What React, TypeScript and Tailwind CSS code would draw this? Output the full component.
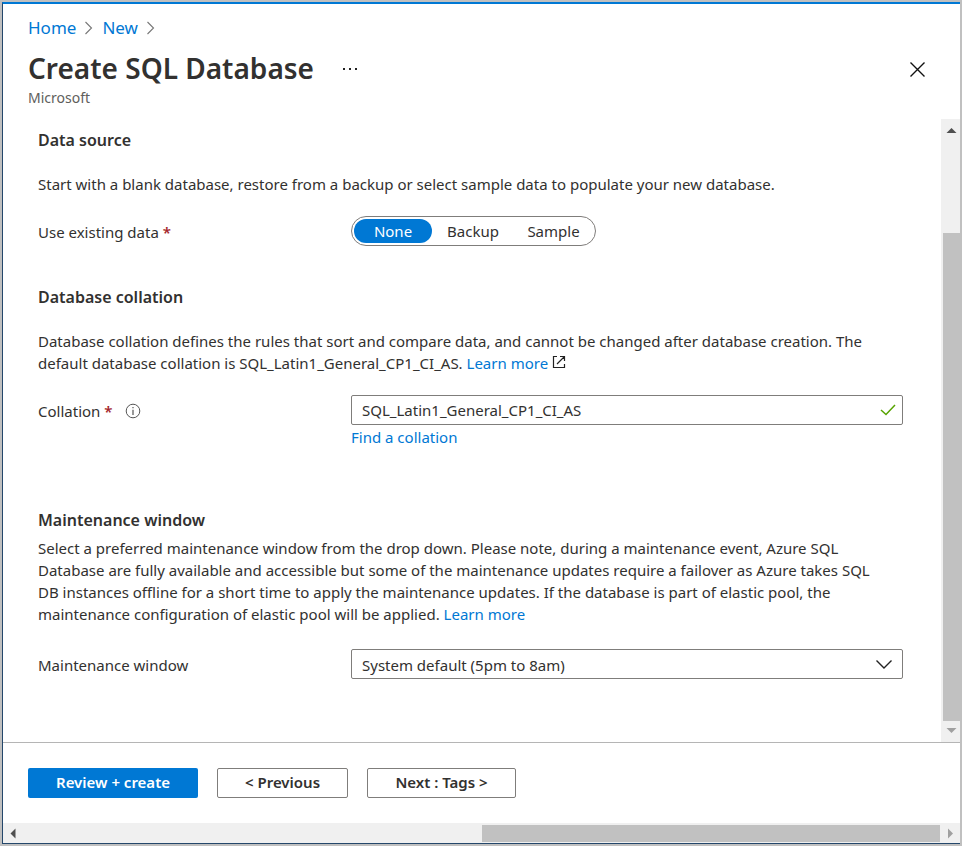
import type { ReactNode } from "react";

const link = "text-[#0078d4] hover:underline";

function Crumb({ children }: { children: ReactNode }) {
  return (
    <li className="flex items-center">
      <a href="#" className={link}>
        {children}
      </a>
      <svg className="mx-[7px] h-4 w-3" viewBox="0 0 12 16" fill="none" stroke="#777" strokeWidth="1.1" aria-hidden="true">
        <path d="M2.5 2 8.5 8 2.5 14" />
      </svg>
    </li>
  );
}

function Heading({ children }: { children: ReactNode }) {
  return <h2 className="text-base leading-[22px] font-semibold">{children}</h2>;
}

function Required() {
  return (
    <span className="ml-1 font-semibold text-[#a4262c]" aria-hidden="true">
      *
    </span>
  );
}

function Choice({ label, width, checked }: { label: string; width: string; checked?: boolean }) {
  return (
    <label
      className={`${width} flex h-6 cursor-pointer items-center justify-center rounded-full has-checked:bg-[#0078d4] has-checked:text-white`}
    >
      <input type="radio" name="existing-data" defaultChecked={checked} className="sr-only" />
      {label}
    </label>
  );
}

function Arrow({ d, fill }: { d: string; fill: string }) {
  return (
    <svg className="size-5 shrink-0" viewBox="0 0 20 20" fill={fill} aria-hidden="true">
      <path d={d} />
    </svg>
  );
}

export default function App() {
  return (
    <div className="flex min-h-screen flex-col border-2 border-[#c0c0c0] font-['Noto_Sans','Open_Sans',sans-serif] text-[15px] leading-[22px] text-[#323130]">
      <div className="flex flex-1 flex-col border-t-2 border-b border-l border-t-[#0078d4] border-b-[#24476b] border-l-[#24476b] bg-white">
        <header className="flex items-start justify-between pt-3 pr-7 pb-[11px] pl-[25px]">
          <div>
            <nav aria-label="Breadcrumb">
              <ol className="flex text-[17px] leading-6">
                <Crumb>Home</Crumb>
                <Crumb>New</Crumb>
              </ol>
            </nav>
            <div className="mt-2 flex items-center gap-6">
              <h1 className="text-[28px] leading-10 font-semibold">Create SQL Database</h1>
              <button type="button" aria-label="More" className="p-1">
                <svg className="h-4 w-4" viewBox="0 0 16 16" fill="#222" aria-hidden="true">
                  <path d="M1 8h2v2H1zM7 8h2v2H7zM13 8h2v2h-2z" />
                </svg>
              </button>
            </div>
            <p className="text-sm leading-5 text-[#605e5c]">Microsoft</p>
          </div>
          <button type="button" aria-label="Close" className="mt-10 p-1">
            <svg className="size-5" viewBox="0 0 20 20" fill="none" stroke="#111" strokeWidth="1.4" aria-hidden="true">
              <path d="m2.500 2.500 14 14M16.500 2.500l-14 14" />
            </svg>
          </button>
        </header>

        <div className="flex flex-1">
          <main className="flex-1 pt-[10px] pr-[38px] pb-10 pl-[35px]">
            <section>
              <Heading>Data source</Heading>
              <p className="mt-[22px]">
                Start with a blank database, restore from a backup or select sample data to populate your new database.
              </p>
              <div className="mt-[21px] flex items-center" role="radiogroup" aria-labelledby="existing">
                <span id="existing" className="w-[313px] shrink-0 pt-[2px]">
                  Use existing data
                  <Required />
                </span>
                <div className="flex h-[30px] items-center rounded-full border border-[#7f7d7b] px-[2px]">
                  <Choice label="None" width="w-[78px]" checked />
                  <Choice label="Backup" width="w-[82px]" />
                  <Choice label="Sample" width="w-[79px]" />
                </div>
              </div>
            </section>

            <section className="mt-10">
              <Heading>Database collation</Heading>
              <p className="mt-[22px]">
                Database collation defines the rules that sort and compare data, and cannot be changed after database creation. The
                <br />
                default database collation is SQL_Latin1_General_CP1_CI_AS.{" "}
                <a href="#" className={link}>
                  Learn more
                  <svg
                    className="ml-1 inline size-[14px] align-baseline"
                    viewBox="0 0 14 14"
                    fill="none"
                    stroke="#222"
                    strokeWidth="1.2"
                    aria-hidden="true"
                  >
                    <path d="M5 1.5H1.5v11h11V9M8 1.5h4.500v4.500M12.500 1.500 5 9" />
                  </svg>
                </a>
              </p>
              <div className="mt-[21px] flex">
                <div className="flex h-[30px] w-[313px] shrink-0 items-center pt-[2px]">
                  <label htmlFor="collation">
                    Collation
                    <Required />
                  </label>
                  <svg className="ml-3 size-4" viewBox="0 0 16 16" fill="none" stroke="#555" aria-hidden="true">
                    <circle cx="8" cy="8" r="6.800" />
                    <path d="M8 6.800V12M8 4v1.300" strokeWidth="1.200" />
                  </svg>
                </div>
                <div className="flex-1">
                  <div className="flex h-[30px] items-center rounded-[2px] border border-[#7f7d7b] pr-[6px] pl-[10px]">
                    <input
                      id="collation"
                      type="text"
                      defaultValue="SQL_Latin1_General_CP1_CI_AS"
                      className="min-w-0 flex-1 outline-none"
                    />
                    <svg className="size-4" viewBox="0 0 16 16" fill="none" stroke="#57a300" strokeWidth="1.500" aria-hidden="true">
                      <path d="m1 8 5 4.500L15 3" />
                    </svg>
                  </div>
                  <a href="#" className={`mt-px inline-block ${link}`}>
                    Find a collation
                  </a>
                </div>
              </div>
            </section>

            <section className="mt-[61px]">
              <Heading>Maintenance window</Heading>
              <p className="mt-[6px]">
                Select a preferred maintenance window from the drop down. Please note, during a maintenance event, Azure SQL
                <br />
                Database are fully available and accessible but some of the maintenance updates require a failover as Azure takes SQL
                <br />
                DB instances offline for a short time to apply the maintenance updates. If the database is part of elastic pool, the
                <br />
                maintenance configuration of elastic pool will be applied.{" "}
                <a href="#" className={link}>
                  Learn more
                </a>
              </p>
              <div className="mt-6 flex items-center">
                <label htmlFor="window" className="w-[313px] shrink-0 pt-[2px]">
                  Maintenance window
                </label>
                <div className="grid flex-1 items-center">
                  <select
                    id="window"
                    className="col-start-1 row-start-1 h-[30px] w-full appearance-none rounded-[2px] border border-[#7f7d7b] bg-white pt-px pl-[10px]"
                  >
                    <option>System default (5pm to 8am)</option>
                  </select>
                  <svg
                    className="pointer-events-none col-start-1 row-start-1 mr-[11px] size-4 justify-self-end"
                    viewBox="0 0 16 16"
                    fill="none"
                    stroke="#222"
                    strokeWidth="1.400"
                    aria-hidden="true"
                  >
                    <path d="m.5 4.500 7.500 7.500 7.500-7.500" />
                  </svg>
                </div>
              </div>
            </section>
          </main>

          <div className="flex w-[19px] flex-col bg-[#f0f0f0] pb-px" aria-hidden="true">
            <Arrow d="M5.500 14 10.500 9l5 5z" fill="#4f4f4f" />
            <div className="flex flex-1 flex-col pt-[94px] pl-[2px]">
              <div className="flex-1 bg-[#c1c1c1]" />
            </div>
            <Arrow d="M5.500 7 10.500 12l5-5z" fill="#a0a0a0" />
          </div>
        </div>

        <footer>
          <div className="flex gap-[19px] border-t border-[#b5b5b5] px-[25px] py-[25px] font-semibold">
            <button type="button" className="h-[30px] w-[170px] rounded-[2px] bg-[#0078d4] pb-[2px] text-white">
              Review + create
            </button>
            <button type="button" className="h-[30px] w-[131px] rounded-[2px] border border-[#7f7d7b] pb-[2px]">
              &lt; Previous
            </button>
            <button type="button" className="h-[30px] w-[149px] rounded-[2px] border border-[#7f7d7b] pb-[2px]">
              Next : Tags &gt;
            </button>
          </div>
          <div className="flex h-5 bg-[#f0f0f0]" aria-hidden="true">
            <Arrow d="M12.500 5.500 7.500 10.500l5 5z" fill="#4f4f4f" />
            <div className="flex flex-1 justify-end pt-[2px] pb-px">
              <div className="w-1/2 bg-[#c1c1c1]" />
            </div>
            <Arrow d="M8 5.500 13 10.500l-5 5z" fill="#a0a0a0" />
          </div>
        </footer>
      </div>
    </div>
  );
}
